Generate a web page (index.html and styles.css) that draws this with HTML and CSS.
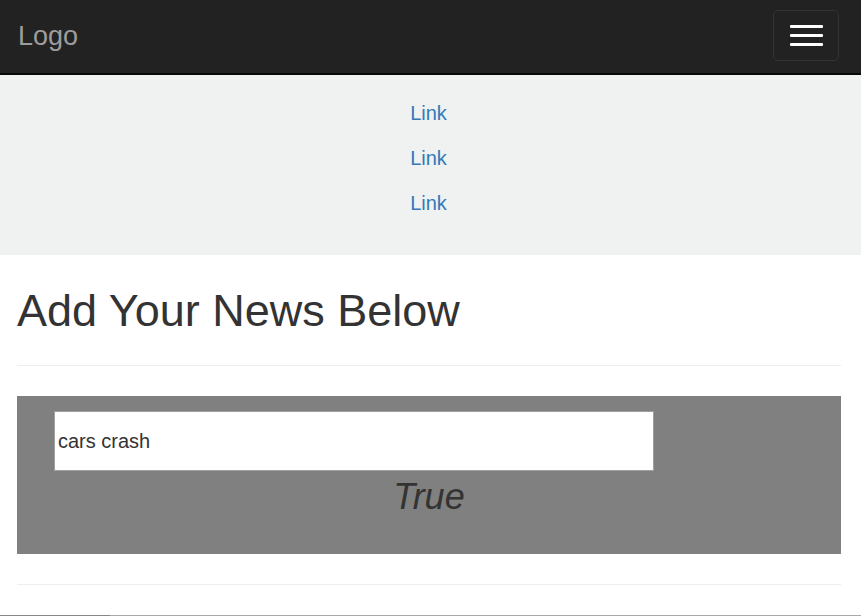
FILE: index.html
```html
<!DOCTYPE html>
<html lang="en">
<head>
<meta charset="utf-8">
<title>News</title>
<link rel="stylesheet" href="styles.css">
</head>
<body>
<nav class="navbar">
  <a class="brand" href="#">Logo</a>
  <button class="toggle" type="button" aria-label="Toggle navigation">
    <span class="bar"></span>
    <span class="bar"></span>
    <span class="bar"></span>
  </button>
</nav>
<div class="menu">
  <a class="menu-link" href="#">Link</a>
  <a class="menu-link" href="#">Link</a>
  <a class="menu-link" href="#">Link</a>
</div>
<main class="content">
  <h1 class="title">Add Your News Below</h1>
  <hr class="rule">
  <section class="panel">
    <input class="news-input" type="text" value="cars crash">
    <p class="result">True</p>
  </section>
  <hr class="rule">
</main>
<footer class="footer"></footer>
</body>
</html>
```

FILE: styles.css
```css
html, body {
  margin: 0;
  padding: 0;
}
body {
  font-family: "Liberation Sans", Arial, sans-serif;
  color: #333;
  background: #fff;
  overflow: hidden;
}
.navbar {
  height: 73px;
  background: #222;
  border-bottom: 2px solid #080808;
  display: flex;
  align-items: center;
  justify-content: space-between;
  padding: 0 22px 0 18px;
  box-sizing: content-box;
}
.brand {
  color: #9d9d9d;
  font-size: 27px;
  text-decoration: none;
  line-height: 1;
  margin-top: 0;
}
.toggle {
  width: 66px;
  height: 51px;
  margin-top: -2px;
  border: 1px solid #333;
  border-radius: 5px;
  background: transparent;
  display: flex;
  flex-direction: column;
  align-items: center;
  justify-content: center;
  gap: 6px;
  padding: 0;
}
.bar {
  display: block;
  width: 33px;
  height: 3px;
  background: #fff;
  border-radius: 1px;
}
.menu {
  background: #f0f1f1;
  height: 180px;
  display: flex;
  flex-direction: column;
  align-items: center;
  padding: 16px 4px 0 0;
  box-sizing: border-box;
}
.menu-link {
  color: #337ab7;
  font-size: 20px;
  line-height: 45px;
  text-decoration: none;
}
.content {
  padding: 0 20px 0 17px;
}
.title {
  font-size: 45px;
  font-weight: normal;
  line-height: 48px;
  margin: 32px 0 0;
  color: #333;
}
.rule {
  border: 0;
  border-top: 1px solid #eee;
  margin: 30px 0 0;
  height: 0;
}
.panel {
  background: #808080;
  height: 158px;
  box-sizing: border-box;
  padding: 15px 0 0 37px;
  margin-top: 30px;
}
.news-input {
  display: block;
  width: 600px;
  height: 60px;
  box-sizing: border-box;
  border: 1px solid #a0a0a0;
  background: #fff;
  font-family: "Liberation Sans", Arial, sans-serif;
  font-size: 20px;
  color: #333;
  padding: 0 3px;
  margin: 0;
  outline: none;
}
.result {
  margin: 6px 0 0 -37px;
  text-align: center;
  font-style: italic;
  font-size: 36px;
  line-height: 1.1;
  color: #333;
}
.footer {
  margin-top: 30px;
  height: 20px;
  background: linear-gradient(to right, #888 0, #888 110px, #aaa 110px, #aaa 100%);
}
```
